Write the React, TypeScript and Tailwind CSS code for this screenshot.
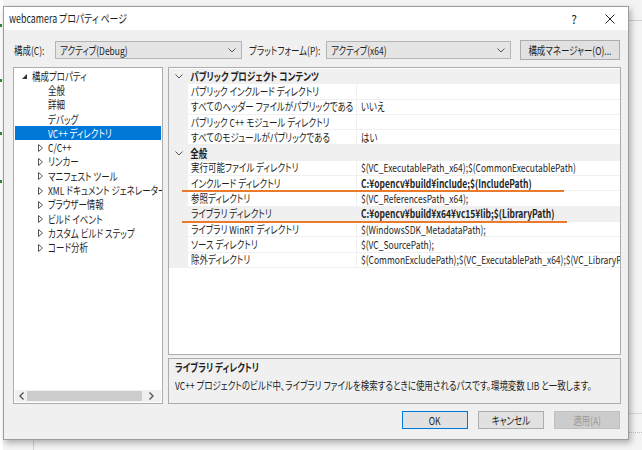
import type { ReactNode } from 'react';

// 横幅の狭い UI フォントに寄せるため、テキストだけ横方向に詰める
function T({ children, className = '' }: { children: ReactNode; className?: string }) {
  return <span className={`inline-block origin-left scale-x-[0.77] whitespace-nowrap ${className}`}>{children}</span>;
}

function Chevron() {
  return (
    <svg width="8" height="5" viewBox="0 0 8 5" className="shrink-0">
      <path d="M0.5 0.5 L4 4 L7.5 0.5" fill="none" stroke="#555" strokeWidth="1" />
    </svg>
  );
}

function Combo({ text, width }: { text: string; width: string }) {
  return (
    <div className={`${width} h-[18px] shrink-0 flex items-center justify-between pl-[4px] pr-[5px] bg-[#e5e5e5] border border-[#b4b4b4]`}>
      <T>{text}</T>
      <Chevron />
    </div>
  );
}

const tree: { label: string; level: number; kind: 'open' | 'closed' | 'leaf'; selected?: boolean }[] = [
  { label: '構成プロパティ', level: 0, kind: 'open' },
  { label: '全般', level: 1, kind: 'leaf' },
  { label: '詳細', level: 1, kind: 'leaf' },
  { label: 'デバッグ', level: 1, kind: 'leaf' },
  { label: 'VC++ ディレクトリ', level: 1, kind: 'leaf', selected: true },
  { label: 'C/C++', level: 1, kind: 'closed' },
  { label: 'リンカー', level: 1, kind: 'closed' },
  { label: 'マニフェスト ツール', level: 1, kind: 'closed' },
  { label: 'XML ドキュメント ジェネレーター', level: 1, kind: 'closed' },
  { label: 'ブラウザー情報', level: 1, kind: 'closed' },
  { label: 'ビルド イベント', level: 1, kind: 'closed' },
  { label: 'カスタム ビルド ステップ', level: 1, kind: 'closed' },
  { label: 'コード分析', level: 1, kind: 'closed' },
];

type GridRow =
  | { cat: string }
  | { name: string; value?: string; bold?: boolean; mark?: string; shade?: boolean };

const rows: GridRow[] = [
  { cat: 'パブリック プロジェクト コンテンツ' },
  { name: 'パブリック インクルード ディレクトリ' },
  { name: 'すべてのヘッダー ファイルがパブリックである', value: 'いいえ' },
  { name: 'パブリック C++ モジュール ディレクトリ' },
  { name: 'すべてのモジュールがパブリックである', value: 'はい' },
  { cat: '全般' },
  { name: '実行可能ファイル ディレクトリ', value: '$(VC_ExecutablePath_x64);$(CommonExecutablePath)' },
  { name: 'インクルード ディレクトリ', value: 'C:¥opencv¥build¥include;$(IncludePath)', bold: true, mark: 'w-[382px]' },
  { name: '参照ディレクトリ', value: '$(VC_ReferencesPath_x64);' },
  { name: 'ライブラリ ディレクトリ', value: 'C:¥opencv¥build¥x64¥vc15¥lib;$(LibraryPath)', bold: true, mark: 'w-[385px]', shade: true },
  { name: 'ライブラリ WinRT ディレクトリ', value: '$(WindowsSDK_MetadataPath);' },
  { name: 'ソース ディレクトリ', value: '$(VC_SourcePath);' },
  { name: '除外ディレクトリ', value: '$(CommonExcludePath);$(VC_ExecutablePath_x64);$(VC_LibraryPath_x64);' },
];

function Button({ label, variant }: { label: string; variant: 'default' | 'normal' | 'disabled' }) {
  const look =
    variant === 'default'
      ? 'bg-[#e1e1e1] border-[#0078d7] text-[#1e1e1e]'
      : variant === 'disabled'
      ? 'bg-[#cccccc] border-[#bfbfbf] text-[#9a9a9a]'
      : 'bg-[#e1e1e1] border-[#adadad] text-[#1e1e1e]';
  return (
    <div className={`w-[66px] h-[18px] border flex items-center justify-center ${look}`}>
      <span className="inline-block origin-center scale-x-[0.77] whitespace-nowrap">{label}</span>
    </div>
  );
}

export default function App() {
  return (
    <div className="relative w-[642px] h-[450px] overflow-hidden bg-[#f3f3f3] text-[11px] leading-none text-[#1e1e1e] [font-family:'Noto_Sans_CJK_JP',sans-serif] [font-feature-settings:'palt']">
      {/* 背後のエディタの切れ端 */}
      <div className="absolute left-0 top-0 w-[3px] h-[450px] bg-white" />
      <div className="absolute left-0 top-[24px] w-[2px] h-[3px] bg-[#2e8b2e]" />
      <div className="absolute left-0 top-[79px] w-[2px] h-[3px] bg-[#2e8b2e]" />
      <div className="absolute left-0 top-[132px] w-[2px] h-[3px] bg-[#2e8b2e]" />
      <div className="absolute left-0 top-[180px] w-[2px] h-[3px] bg-[#2e8b2e]" />
      <div className="absolute right-0 top-[20px] w-[13px] h-px bg-[#cfcfcf]" />
      <div className="absolute right-0 top-[413px] w-[13px] h-px bg-[#d6d6d6]" />
      <div className="absolute right-0 top-[432px] w-[13px] h-px border-t border-dotted border-[#bdbdbd]" />
      <div className="absolute left-[33px] top-[441px] w-px h-[9px] bg-[#d0d0d0]" />

      {/* ダイアログ */}
      <div className="absolute left-[3px] top-[6px] w-[626px] h-[434px] border border-[#9c9c9c] bg-[#f0f0f0] shadow-[2px_3px_6px_rgba(0,0,0,0.28)] flex flex-col">
        {/* タイトルバー */}
        <div className="h-[23px] bg-white flex items-center pl-[5px] pr-[13px]">
          <T className="text-[11.5px]">webcamera プロパティ ページ</T>
          <div className="ml-auto flex items-center gap-[28px]">
            <span className="text-[12px] text-[#222]">?</span>
            <svg width="10" height="10" viewBox="0 0 10 10">
              <path d="M0.5 0.5 L9.5 9.5 M9.5 0.5 L0.5 9.5" stroke="#222" strokeWidth="1" />
            </svg>
          </div>
        </div>

        {/* 構成 / プラットフォーム */}
        <div className="flex items-center pl-[10px] mt-[10px] h-[20px]">
          <div className="w-[41px] shrink-0"><T>構成(C):</T></div>
          <Combo text="アクティブ(Debug)" width="w-[187px]" />
          <div className="w-[84px] shrink-0 pl-[7px]"><T>プラットフォーム(P):</T></div>
          <Combo text="アクティブ(x64)" width="w-[185px]" />
          <div className="ml-[9px] w-[100px] h-[20px] shrink-0 bg-[#e1e1e1] border border-[#adadad] flex items-center justify-center">
            <span className="inline-block origin-center scale-x-[0.77] whitespace-nowrap">構成マネージャー(O)...</span>
          </div>
        </div>

        {/* パネル */}
        <div className="flex mt-[7px] pl-[9px] h-[337px]">
          {/* ツリー */}
          <div className="w-[150px] shrink-0 bg-white border border-[#adadad] flex flex-col overflow-hidden">
            <div className="pt-[1px] px-[1px] flex-1">
              {tree.map(item => (
                <div
                  key={item.label}
                  className={`h-[14.3px] flex items-center ${item.selected ? 'bg-[#0078d7] text-white' : ''}`}
                >
                  {item.level === 0 ? (
                    <div className="w-[17px] shrink-0 pl-[7px] flex items-center">
                      <svg width="5" height="5" viewBox="0 0 5 5">
                        <polygon points="5,0 5,5 0,5" fill="#333" />
                      </svg>
                    </div>
                  ) : (
                    <div className="w-[33px] shrink-0 pl-[23px] flex items-center">
                      {item.kind === 'closed' && (
                        <svg width="5" height="8" viewBox="0 0 5 8">
                          <polygon points="0.5,0.5 4.5,4 0.5,7.5" fill="#fff" stroke="#555" strokeWidth="1" />
                        </svg>
                      )}
                    </div>
                  )}
                  <T>{item.label}</T>
                </div>
              ))}
            </div>
            {/* 横スクロールバー */}
            <div className="h-[12px] mb-[1px] mx-[1px] bg-[#f0f0f0] flex items-center">
              <div className="w-[12px] flex justify-center">
                <svg width="5" height="8" viewBox="0 0 5 8">
                  <path d="M4.5 0.5 L1 4 L4.5 7.5" fill="none" stroke="#555" strokeWidth="1.4" />
                </svg>
              </div>
              <div className="w-[115px] h-[10px] bg-[#cdcdcd]" />
              <div className="flex-1 flex justify-center">
                <svg width="5" height="8" viewBox="0 0 5 8">
                  <path d="M0.5 0.5 L4 4 L0.5 7.5" fill="none" stroke="#555" strokeWidth="1.4" />
                </svg>
              </div>
            </div>
          </div>

          {/* 右側 */}
          <div className="ml-[5px] w-[453px] flex flex-col">
            <div className="h-[288px] bg-white border border-[#adadad] overflow-hidden pt-[1px]">
              {rows.map((r, i) =>
                'cat' in r ? (
                  <div key={i} className="h-[15.3px] flex items-center bg-[#f0f0f0]">
                    <div className="w-[19px] shrink-0 flex justify-center pl-[1px]">
                      <Chevron />
                    </div>
                    <T className="pl-[3px] font-bold">{r.cat}</T>
                  </div>
                ) : (
                  <div key={i} className="relative h-[15.3px] flex">
                    <div className="w-[19px] shrink-0 bg-[#f0f0f0]" />
                    <div className={`w-[169px] shrink-0 flex items-center pl-[3px] border-b border-r border-[#f0f0f0] ${r.shade ? 'bg-[#f0f0f0]' : ''}`}>
                      <T>{r.name}</T>
                    </div>
                    <div className={`flex-1 flex items-center pl-[4px] border-b border-[#f0f0f0] overflow-hidden ${r.shade ? 'bg-[#f0f0f0]' : ''}`}>
                      {r.value && <T className={r.bold ? 'font-bold' : ''}>{r.value}</T>}
                    </div>
                    {r.mark && <div className={`absolute z-10 left-[13px] top-[14px] h-[2px] bg-[#ea7a2c] ${r.mark}`} />}
                  </div>
                )
              )}
            </div>
            <div className="mt-[3px] flex-1 bg-[#f0f0f0] border border-[#adadad] pl-[6px] pt-[3px] flex flex-col gap-[6px]">
              <T className="font-semibold h-[12px]">ライブラリ ディレクトリ</T>
              <T className="h-[12px]">VC++ プロジェクトのビルド中、ライブラリ ファイルを検索するときに使用されるパスです。環境変数 LIB と一致します。</T>
            </div>
          </div>
        </div>

        {/* ボタン */}
        <div className="flex justify-end gap-[10px] pr-[8px] mt-[7px]">
          <Button label="OK" variant="default" />
          <Button label="キャンセル" variant="normal" />
          <Button label="適用(A)" variant="disabled" />
        </div>
      </div>
    </div>
  );
}
